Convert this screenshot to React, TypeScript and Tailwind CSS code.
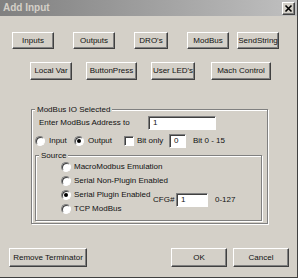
import type { ReactNode } from 'react'

const raised =
  'bg-[#d4d0c8] border border-t-white border-l-white border-r-[#404040] border-b-[#404040] shadow-[inset_-1px_-1px_0_#808080]'
const sunken =
  'bg-white border border-t-[#808080] border-l-[#808080] border-r-white border-b-white shadow-[inset_1px_1px_0_#404040]'

function Btn({ label, className }: { label: string; className: string }) {
  return (
    <button type="button" className={`${raised} ${className} flex items-center justify-center leading-none whitespace-nowrap`}>
      {label}
    </button>
  )
}

function Radio({ checked }: { checked?: boolean }) {
  return (
    <span className={`${sunken} w-[10px] h-[10px] rounded-full flex items-center justify-center shrink-0`}>
      {checked && <span className="w-[4px] h-[4px] rounded-full bg-black" />}
    </span>
  )
}

function Field({ value, className }: { value: string; className: string }) {
  return (
    <div className={`${sunken} ${className} h-[14px] pl-[4px] flex items-center leading-none shrink-0`}>{value}</div>
  )
}

function Group({ title, className, children }: { title: string; className: string; children: ReactNode }) {
  return (
    <div className={`relative border border-[#808080] shadow-[inset_1px_1px_0_#fff,1px_1px_0_#fff] ${className}`}>
      <span className="absolute left-[3px] -top-[6px] px-[2px] bg-[#d4d0c8] leading-[11px] whitespace-nowrap">{title}</span>
      {children}
    </div>
  )
}

function SourceRow({ label, checked }: { label: string; checked?: boolean }) {
  return (
    <div className="h-[14px] flex items-center pl-[25px]">
      <Radio checked={checked} />
      <span className="ml-[3px] whitespace-nowrap">{label}</span>
    </div>
  )
}

export default function App() {
  return (
    <div className="w-[300px] h-[278px] bg-white">
      <div className="w-[298px] h-[278px] bg-[#d4d0c8] border-r border-b border-[#404040] flex flex-col text-[#111] text-[8px] font-['Liberation_Sans',Arial,sans-serif]">
        {/* title bar */}
        <div className="h-[16px] shrink-0 bg-linear-to-r from-[#808080] to-[#c0c0c0] flex items-center">
          <span className="ml-[3px] text-[10px] font-bold text-[#d4d0c8] leading-none">Add Input</span>
          <button type="button" className={`${raised} ml-auto mr-[2px] w-[13px] h-[13px] flex items-center justify-center`}>
            <svg width="9" height="9" viewBox="0 0 9 9">
              <path d="M1.5 1.5 L7.5 7.5 M7.5 1.5 L1.5 7.5" stroke="#000" strokeWidth="1.6" />
            </svg>
          </button>
        </div>

        <div className="flex mt-[16px] h-[17px]">
          <Btn label="Inputs" className="ml-[12px] w-[42px]" />
          <Btn label="Outputs" className="ml-[19px] w-[42px]" />
          <Btn label="DRO's" className="ml-[19px] w-[34px]" />
          <Btn label="ModBus" className="ml-[19px] w-[42px]" />
          <Btn label="SendString" className="ml-[8px] w-[42px]" />
        </div>

        <div className="flex mt-[13px] h-[18px]">
          <Btn label="Local Var" className="ml-[30px] w-[42px]" />
          <Btn label="ButtonPress" className="ml-[14px] w-[51px]" />
          <Btn label="User LED's" className="ml-[14px] w-[44px]" />
          <Btn label="Mach Control" className="ml-[16px] w-[60px]" />
        </div>

        <Group title="ModBus IO Selected" className="mt-[29px] ml-[31px] w-[237px] h-[115px] shrink-0">
          <div className="mt-[6px] h-[14px] flex items-center">
            <span className="ml-[7px] w-[109px] whitespace-nowrap">Enter ModBus Address to</span>
            <Field value="1" className="w-[68px]" />
          </div>

          <div className="mt-[4px] h-[14px] flex items-center">
            <span className="ml-[3px]">
              <Radio />
            </span>
            <span className="ml-[4px] w-[25px]">Input</span>
            <Radio checked />
            <span className="ml-[4px] w-[36px]">Output</span>
            <span className={`${sunken} w-[10px] h-[10px] shrink-0`} />
            <span className="ml-[3px] w-[32px] whitespace-nowrap">Bit only</span>
            <Field value="0" className="w-[17px]" />
            <span className="ml-[7px] whitespace-nowrap">Bit 0 - 15</span>
          </div>

          <Group title="Source" className="mt-[7px] ml-[3px] w-[227px] h-[66px]">
            <div className="flex">
              <div className="w-[117px] pt-[4px] flex flex-col">
                <SourceRow label="MacroModbus Emulation" />
                <SourceRow label="Serial Non-Plugin Enabled" />
                <SourceRow label="Serial Plugin Enabled" checked />
                <SourceRow label="TCP ModBus" />
              </div>
              <div className="mt-[37px] h-[14px] flex items-center">
                <span className="w-[23px] whitespace-nowrap">CFG#</span>
                <Field value="1" className="w-[32px]" />
                <span className="ml-[7px]">0-127</span>
              </div>
            </div>
          </Group>
        </Group>

        <div className="flex mt-[24px] h-[19px]">
          <Btn label="Remove Terminator" className="ml-[9px] w-[78px]" />
          <Btn label="OK" className="ml-[84px] w-[56px]" />
          <Btn label="Cancel" className="ml-[6px] w-[56px]" />
        </div>
      </div>
    </div>
  )
}
